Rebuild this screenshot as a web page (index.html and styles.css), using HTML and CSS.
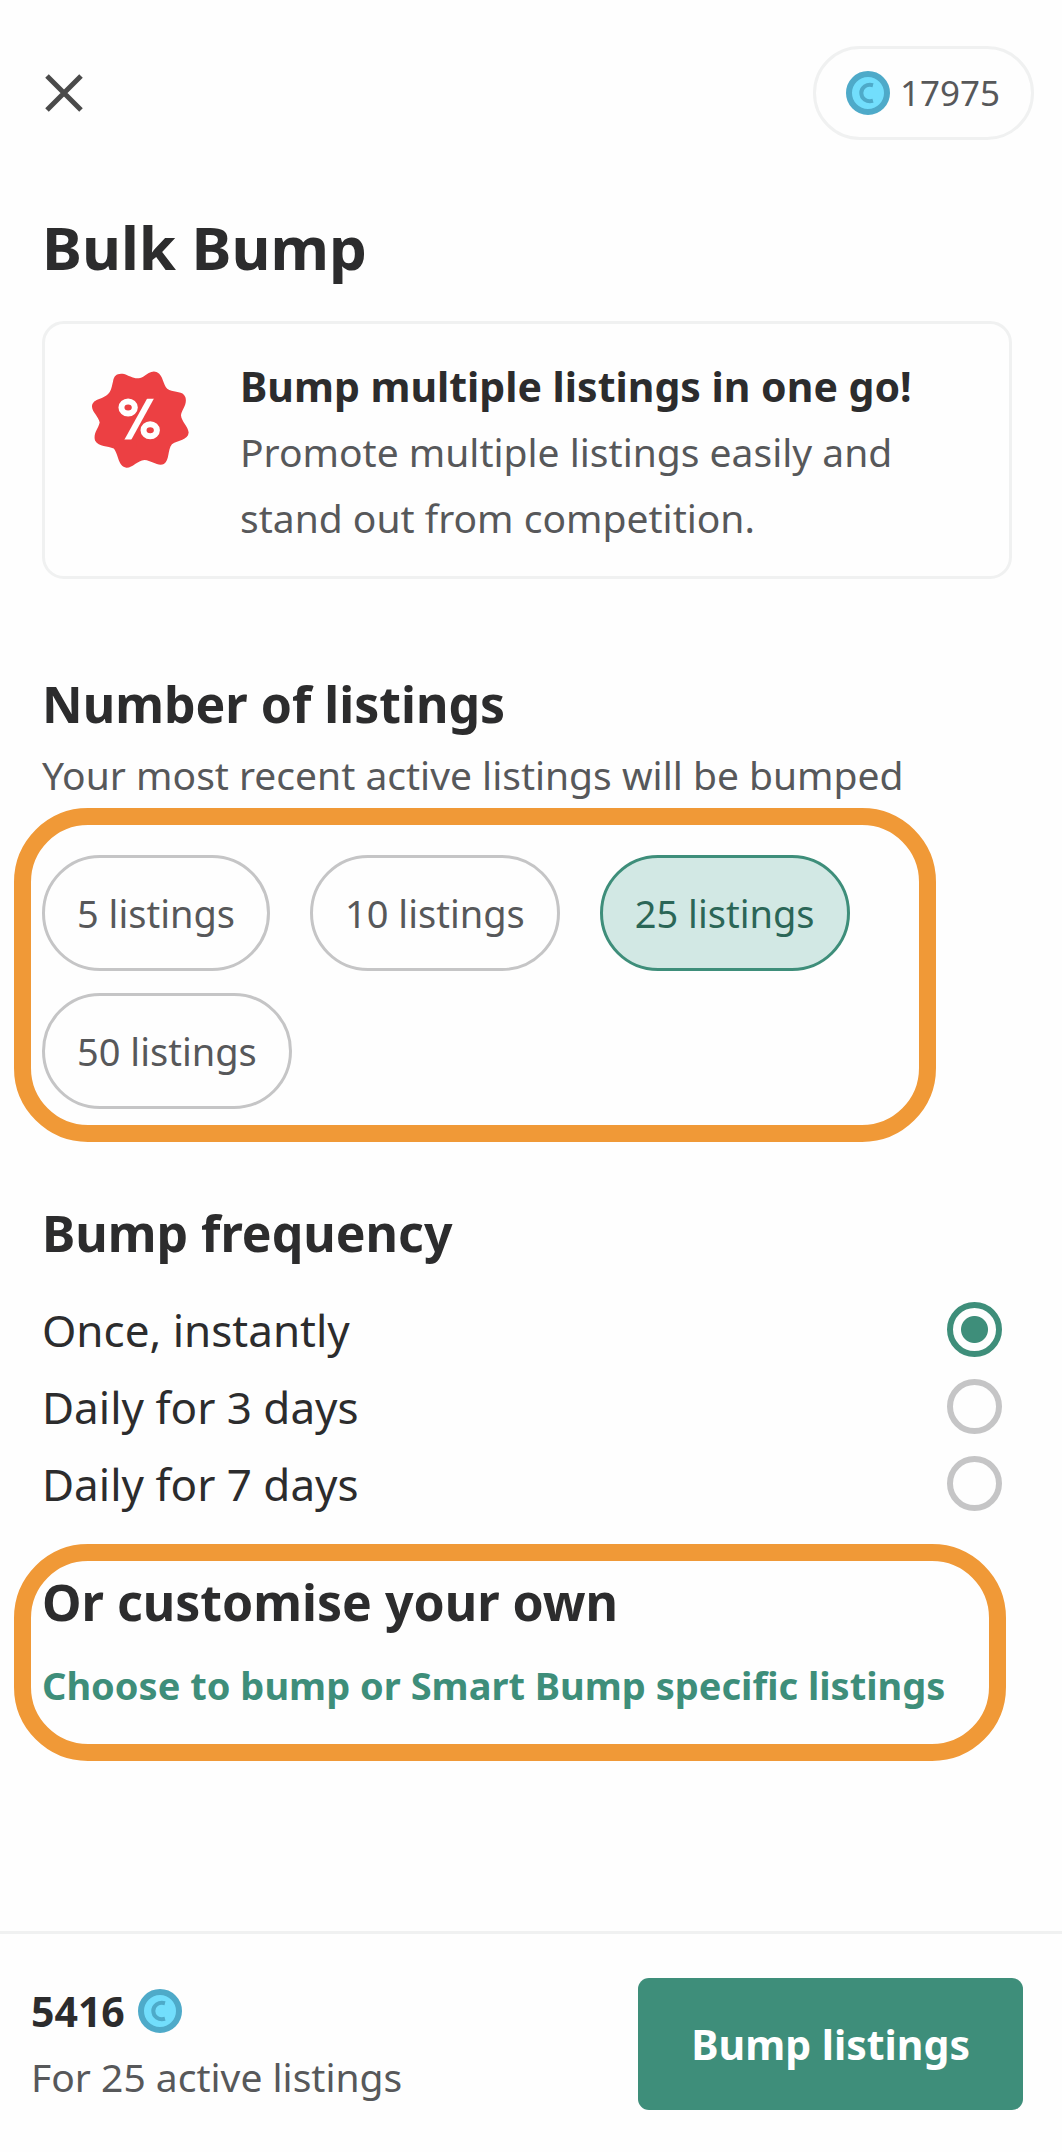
FILE: index.html
```html
<!DOCTYPE html>
<html lang="en">
<head>
    <meta charset="UTF-8">
    <meta name="viewport" content="width=device-width, initial-scale=1.0">
    <title>Bulk Bump</title>
    <link rel="stylesheet" href="styles.css">
</head>
<body>
    <div class="app">
        <header class="app-header">
            <button class="close-btn" aria-label="Close">
                <svg width="38" height="38" viewBox="0 0 38 38" fill="none" stroke="#4a4a4a" stroke-width="5">
                    <path d="M2 2l34 34M36 2L2 36"/>
                </svg>
            </button>
            <div class="balance">
                <svg class="coin" viewBox="0 0 44 44" fill="none">
                    <circle cx="22" cy="22" r="19" fill="#72defc" stroke="#4eaac9" stroke-width="6"/>
                    <path d="M27 14.2C20.5 12.5 15.3 16.5 15.3 22s5.2 9.5 11.7 7.8" stroke="#4eaac9" stroke-width="4"/>
                </svg>
                <span>17975</span>
            </div>
        </header>

        <main class="app-main">
            <h1>Bulk Bump</h1>

            <div class="promo-card">
                <svg class="promo-badge" viewBox="187 184 290 290" fill="none">
                    <path fill="#ec4043" d="M250 215C252 197 264 189 283 193C300 198 318 214 340 201C358 188 372 178 388 192C402 206 400 232 418 241C436 249 458 243 466 262C473 284 456 298 453 316C455 336 474 348 476 368C474 392 444 390 426 403C412 420 420 450 402 462C384 470 366 452 344 450C322 452 308 474 290 473C264 470 268 436 252 416C234 408 208 412 196 392C190 370 206 356 210 338C206 318 186 306 187 288C192 264 222 272 240 247C246 238 247 226 250 215Z"/>
                    <g stroke="#fff" stroke-width="18">
                        <ellipse cx="295" cy="293" rx="20" ry="18"/>
                        <ellipse cx="361" cy="361" rx="20" ry="18"/>
                        <path d="M366 259L290 397"/>
                    </g>
                    <path fill="#ec4043" d="M340 245h50v22h-50zM270 389h50v20h-50z"/>
                </svg>
                <div class="promo-text">
                    <h3>Bump multiple listings in one go!</h3>
                    <p>Promote multiple listings easily and stand out from competition.</p>
                </div>
            </div>

            <section class="listings-section">
                <h2>Number of listings</h2>
                <p>Your most recent active listings will be bumped</p>
                <div class="highlight chip-list">
                    <button class="chip">5 listings</button>
                    <button class="chip">10 listings</button>
                    <button class="chip active">25 listings</button>
                    <button class="chip">50 listings</button>
                </div>
            </section>

            <section class="frequency-section">
                <h2>Bump frequency</h2>
                <div class="frequency-options">
                    <label>
                        <span>Once, instantly</span>
                        <input type="radio" name="frequency" value="once" checked>
                    </label>
                    <label>
                        <span>Daily for 3 days</span>
                        <input type="radio" name="frequency" value="3">
                    </label>
                    <label>
                        <span>Daily for 7 days</span>
                        <input type="radio" name="frequency" value="7">
                    </label>
                </div>
            </section>

            <section class="highlight custom-section">
                <h2>Or customise your own</h2>
                <a href="#">Choose to bump or Smart Bump specific listings</a>
            </section>
        </main>

        <footer class="app-footer">
            <div class="summary">
                <div class="price">
                    <strong>5416</strong>
                    <svg class="coin" viewBox="0 0 44 44" fill="none">
                        <circle cx="22" cy="22" r="19" fill="#72defc" stroke="#4eaac9" stroke-width="6"/>
                        <path d="M27 14.2C20.5 12.5 15.3 16.5 15.3 22s5.2 9.5 11.7 7.8" stroke="#4eaac9" stroke-width="4"/>
                    </svg>
                </div>
                <p>For 25 active listings</p>
            </div>
            <button class="bump-btn">Bump listings</button>
        </footer>
    </div>
</body>
</html>
```
FILE: styles.css
```css
* {
    margin: 0;
    padding: 0;
    box-sizing: border-box;
}

body {
    font-family: 'Noto Sans', 'Open Sans', sans-serif;
    font-size: 39px;
    line-height: 66px;
    color: #57585a;
    background-color: #fefefe;
}

button {
    font-family: inherit;
    cursor: pointer;
}

h1,
h2,
h3 {
    color: #2c2c2d;
    font-weight: 700;
}

h1 {
    font-size: 60px;
    line-height: 80px;
}

h2 {
    font-size: 50px;
    line-height: 70px;
}

h3 {
    font-size: 41px;
}

.app {
    min-height: 100vh;
    display: flex;
    flex-direction: column;
}

.app-header {
    display: flex;
    justify-content: space-between;
    align-items: center;
    padding: 46px 28px 0 45px;
}

.close-btn {
    display: flex;
    border: none;
    background: none;
}

.coin {
    width: 44px;
    height: 44px;
}

.balance {
    display: flex;
    align-items: center;
    gap: 10px;
    height: 94px;
    padding: 0 31px 0 30px;
    border: 3px solid #f0f1f1;
    border-radius: 47px;
    font-size: 35px;
}

.app-main {
    flex: 1;
    padding: 67px 50px 40px 42px;
}

.promo-card {
    display: flex;
    align-items: flex-start;
    gap: 51px;
    margin-top: 34px;
    padding: 29px 47px 25px;
    border: 3px solid #f0f1f1;
    border-radius: 22px;
}

.promo-badge {
    flex-shrink: 0;
    width: 97px;
    height: 97px;
    margin-top: 18px;
}

.listings-section {
    margin-top: 90px;
}

.listings-section p {
    margin-top: 3px;
}

/* Orange callout frame, hangs out past the left edge of the text */
.highlight {
    margin-left: -28px;
    border: 17px solid #f09937;
    border-radius: 74px;
}

.chip-list {
    display: flex;
    flex-wrap: wrap;
    gap: 22px 40px;
    max-width: 922px;
    padding: 30px 11px 16px;
}

.chip {
    height: 116px;
    padding: 0 32px;
    border: 3px solid #c5c5c6;
    border-radius: 58px;
    background: none;
    color: #57585a;
    font-size: 38px;
}

.chip.active {
    border-color: #3e8e7a;
    background-color: #d2e8e4;
    color: #2b6657;
}

.frequency-section {
    margin-top: 56px;
}

.frequency-options {
    margin-top: 23px;
    padding-right: 10px;
}

.frequency-options label {
    display: flex;
    justify-content: space-between;
    align-items: center;
    height: 77px;
    color: #2c2c2d;
    font-size: 44px;
    cursor: pointer;
}

.frequency-options input {
    appearance: none;
    width: 55px;
    height: 55px;
    border: 6px solid #c5c5c6;
    border-radius: 50%;
    cursor: pointer;
}

.frequency-options input:checked {
    border-color: #3e8e7a;
    background: radial-gradient(circle, #3e8e7a 13px, transparent 14px);
}

.custom-section {
    margin-top: 22px;
    margin-right: 6px;
    padding: 6px 11px 26px;
}

.custom-section a {
    display: block;
    margin-top: 15px;
    color: #3e8e7a;
    font-size: 38px;
    font-weight: 700;
    text-decoration: none;
}

.app-footer {
    display: flex;
    justify-content: space-between;
    align-items: center;
    padding: 44px 39px 42px 31px;
    border-top: 3px solid #f0f1f1;
}

.price {
    display: flex;
    align-items: center;
    gap: 13px;
    color: #2c2c2d;
    font-size: 41px;
}

.bump-btn {
    height: 132px;
    padding: 0 53px;
    border: none;
    border-radius: 11px;
    background-color: #3e8e7a;
    color: #fff;
    font-size: 41px;
    font-weight: 700;
}
```
